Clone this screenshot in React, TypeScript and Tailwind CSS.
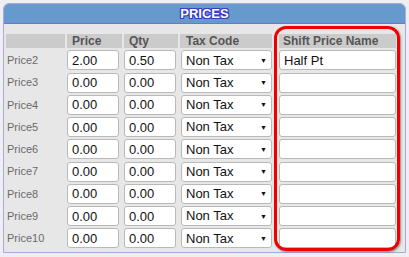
const rows = [
  { label: "Price2", price: "2.00", qty: "0.50", name: "Half Pt" },
  { label: "Price3", price: "0.00", qty: "0.00", name: "" },
  { label: "Price4", price: "0.00", qty: "0.00", name: "" },
  { label: "Price5", price: "0.00", qty: "0.00", name: "" },
  { label: "Price6", price: "0.00", qty: "0.00", name: "" },
  { label: "Price7", price: "0.00", qty: "0.00", name: "" },
  { label: "Price8", price: "0.00", qty: "0.00", name: "" },
  { label: "Price9", price: "0.00", qty: "0.00", name: "" },
  { label: "Price10", price: "0.00", qty: "0.00", name: "" },
];

function Field({ value, className }: { value: string; className: string }) {
  return (
    <input
      readOnly
      value={value}
      className={`h-[20px] rounded-[3px] border border-[#b9b9b9] bg-white pl-[4px] text-[13px] text-[#111] outline-none ${className}`}
    />
  );
}

function TaxSelect() {
  return (
    <div className="flex h-[20px] w-[91px] ml-[1px] items-center justify-between rounded-[3px] border border-[#b9b9b9] bg-white pl-[4px] pr-[4px] text-[13px] text-[#111]">
      <span>Non Tax</span>
      <span className="text-[7px] leading-none">▼</span>
    </div>
  );
}

export default function App() {
  return (
    <div className="relative h-[257px] w-[409px] bg-[#efefef] pl-[3px] pt-[3px] font-['Liberation_Sans',Arial,sans-serif]">
      <div className="h-[250px] w-[403px] overflow-hidden rounded-t-[6px] border border-[#a9a9dc] bg-[#e7e7e7]">
        <div className="flex h-[20px] items-center justify-center border-b border-[#7272d6] bg-[#6699cc] text-[13px] font-bold text-white [text-shadow:1px_0_0_#3a3ac4,-1px_0_0_#3a3ac4,0_1px_0_#3a3ac4,0_-1px_0_#3a3ac4,1px_1px_0_#3a3ac4,-1px_-1px_0_#3a3ac4,1px_-1px_0_#3a3ac4,-1px_1px_0_#3a3ac4]">
          PRICES
        </div>
        <div className="grid grid-cols-[59px_55px_54px_92px_122px] gap-x-[2px] gap-y-[2.25px] pl-[2px] pt-[10px]">
          <div className="h-[14px] bg-[#cbcbcb]" />
          <div className="h-[14px] bg-[#cbcbcb] pl-[5px] text-[12px] font-bold leading-[14px] text-[#555]">Price</div>
          <div className="h-[14px] bg-[#cbcbcb] pl-[5px] text-[12px] font-bold leading-[14px] text-[#555]">Qty</div>
          <div className="h-[14px] bg-[#cbcbcb] pl-[6px] text-[12px] font-bold leading-[14px] text-[#555]">Tax Code</div>
          <div className="ml-[5px] h-[14px] bg-[#cbcbcb] pl-[4px] text-[12px] font-bold leading-[14px] text-[#555]">Shift Price Name</div>
          {rows.map((r) => (
            <div key={r.label} className="contents">
              <div className="flex h-[20px] items-center pl-[1px] text-[11px] text-[#6a6a6a]">{r.label}</div>
              <Field value={r.price} className="w-[52px]" />
              <Field value={r.qty} className="w-[52px]" />
              <TaxSelect />
              <Field value={r.name} className="ml-[5px] w-[117px]" />
            </div>
          ))}
        </div>
      </div>
      <div className="absolute left-[274px] top-[26px] h-[225px] w-[126px] rounded-[12px] border-[3px] border-[#ee0000] shadow-[1px_1px_2px_rgba(0,0,0,0.4)]" />
    </div>
  );
}
